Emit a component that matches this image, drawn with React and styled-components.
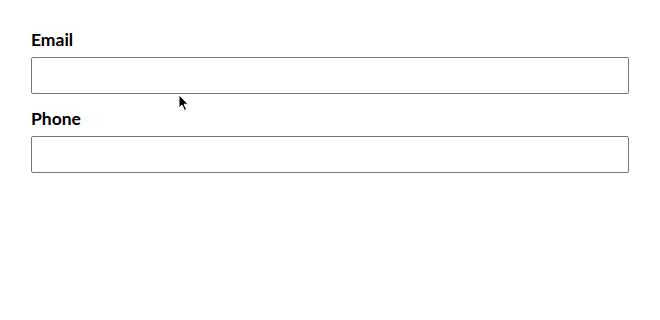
import React from "react";
import styled, { createGlobalStyle } from "styled-components";

const Global = createGlobalStyle`
  html, body { margin: 0; padding: 0; background: #fff; }
  body { font-family: Lato, "Open Sans", sans-serif; }
`;

const Form = styled.form`
  position: relative;
  display: flex;
  flex-direction: column;
  padding: 30px 31px 0 31px;
  width: 660px;
  height: 320px;
  box-sizing: border-box;
`;

const Field = styled.div`
  display: flex;
  flex-direction: column;
  margin-bottom: ${(p) => p.$gap || 0}px;
`;

const Label = styled.label`
  font-family: Lato, "Open Sans", sans-serif;
  font-weight: 700;
  font-size: 17.5px;
  line-height: 20px;
  color: #000;
  margin-bottom: 7px;
`;

const Input = styled.input`
  box-sizing: border-box;
  width: 598px;
  height: 37px;
  border: 1px solid #767676;
  border-radius: 2px;
  padding: 0 8px;
  font-size: 16px;
  background: #fff;
  outline: none;
`;

const Cursor = styled.svg`
  position: absolute;
  left: 178px;
  top: 94px;
  pointer-events: none;
`;

export default function App() {
  return (
    <>
      <Global />
      <Form onSubmit={(e) => e.preventDefault()}>
        <Field $gap={15}>
          <Label htmlFor="email">Email</Label>
          <Input id="email" type="email" />
        </Field>
        <Field>
          <Label htmlFor="phone">Phone</Label>
          <Input id="phone" type="tel" />
        </Field>
        <Cursor width="12" height="18" viewBox="0 0 12 18">
          <path
            d="M1 1 L1 14 L4 11 L6.5 16.5 L8.5 15.6 L6.1 10.2 L10.2 10.2 Z"
            fill="#000"
            stroke="#fff"
            strokeWidth="1"
            strokeLinejoin="round"
          />
        </Cursor>
      </Form>
    </>
  );
}
